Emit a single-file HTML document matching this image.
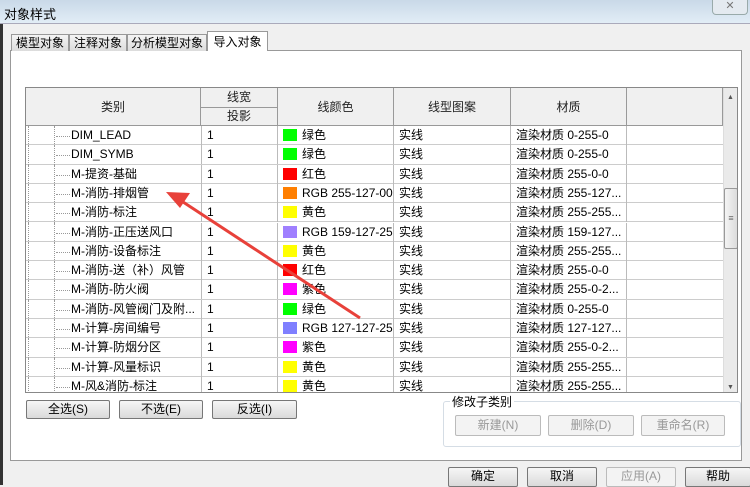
<!DOCTYPE html><html><head><meta charset="utf-8"><style>
*{margin:0;padding:0;box-sizing:border-box}
body{width:750px;height:485px;overflow:hidden;background:#f0f0f0;font-family:"Liberation Sans","Noto Sans CJK SC",sans-serif;font-size:12px;color:#000;position:relative}
.abs{position:absolute}
.title{left:0;top:0;width:750px;height:24px;background:linear-gradient(#c9d9e8,#e2edf6);border-bottom:1px solid #aab}
.tab{position:absolute;top:34px;height:17px;border:1px solid #999;border-bottom:none;background:linear-gradient(#f4f4f4,#dcdcdc);font-size:12px;text-align:center;line-height:16px}
.panel{left:10px;top:50px;width:732px;height:411px;background:#fff;border:1px solid #999}
.grid{left:25px;top:87px;width:713px;height:306px;border:1px solid #888;background:#fff;overflow:hidden}
.hd{position:absolute;background:#f0f0f0;border-right:1px solid #999;border-bottom:1px solid #999;text-align:center;color:#222}
.row{position:absolute;left:0;height:19.3px;width:697px;border-bottom:1px solid #ccc}
.c{position:absolute;top:0;height:19px;line-height:19px;border-right:1px solid #bbb;white-space:nowrap;overflow:hidden;padding-left:5px}
.sw{display:inline-block;width:14px;height:12px;vertical-align:-2px;margin-right:5px}
.btn{position:absolute;height:19px;border:1px solid #777;border-radius:2px;background:linear-gradient(#f6f6f6,#dadada);text-align:center;line-height:17px;font-size:12px}
.dis{color:#999;border-color:#bbb;background:#f3f3f3}
</style></head><body>
<div class="abs title"></div>
<div class="abs" style="left:4px;top:4px;font-size:13px">对象样式</div>
<div class="abs" style="left:712px;top:0;width:36px;height:15px;border:1px solid #9aa;border-top:none;border-radius:0 0 4px 4px;background:#e4eaf0;text-align:center;font-size:11px;color:#777;line-height:13px">✕</div>
<div class="abs" style="left:0;top:24px;width:3px;height:461px;background:#333"></div>
<div class="abs panel"></div>
<div class="tab" style="left:11px;width:58px">模型对象</div>
<div class="tab" style="left:69px;width:58px">注释对象</div>
<div class="tab" style="left:127px;width:80px">分析模型对象</div>
<div class="tab" style="left:207px;top:31px;height:20px;width:61px;background:#fff;line-height:20px">导入对象</div>
<div class="abs grid">
<div class="hd" style="left:0;top:0;width:175px;height:38px;line-height:38px">类别</div>
<div class="hd" style="left:175px;top:0;width:77px;height:20px;line-height:19px">线宽</div>
<div class="hd" style="left:175px;top:20px;width:77px;height:18px;line-height:17px">投影</div>
<div class="hd" style="left:252px;top:0;width:116px;height:38px;line-height:38px">线颜色</div>
<div class="hd" style="left:368px;top:0;width:117px;height:38px;line-height:38px">线型图案</div>
<div class="hd" style="left:485px;top:0;width:116px;height:38px;line-height:38px">材质</div>
<div class="hd" style="left:601px;top:0;width:96px;height:38px"></div>
<div id="rows"></div>
<div class="abs" style="left:697px;top:0;width:16px;height:306px;background:#eaeaea;border-left:1px solid #ddd"></div>
<div class="abs" style="left:698px;top:100px;width:14px;height:61px;background:linear-gradient(90deg,#f4f4f4,#dcdcdc);border:1px solid #999;border-radius:2px;text-align:center;line-height:58px;color:#666;font-size:9px">≡</div>
<div class="abs" style="left:701px;top:6px;font-size:7px;color:#555">▲</div>
<div class="abs" style="left:701px;top:296px;font-size:7px;color:#555">▼</div>
</div>
<div class="btn" style="left:26px;top:400px;width:84px">全选(S)</div>
<div class="btn" style="left:119px;top:400px;width:84px">不选(E)</div>
<div class="btn" style="left:212px;top:400px;width:85px">反选(I)</div>
<div class="abs" style="left:443px;top:401px;width:298px;height:46px;border:1px solid #d5dde5;border-radius:3px"></div>
<div class="abs" style="left:450px;top:393px;background:#fff;padding:0 2px">修改子类别</div>
<div class="btn dis" style="left:455px;top:415px;width:86px;height:21px;line-height:19px">新建(N)</div>
<div class="btn dis" style="left:548px;top:415px;width:86px;height:21px;line-height:19px">删除(D)</div>
<div class="btn dis" style="left:641px;top:415px;width:84px;height:21px;line-height:19px">重命名(R)</div>
<div class="btn" style="left:448px;top:467px;width:70px;height:20px">确定</div>
<div class="btn" style="left:527px;top:467px;width:70px;height:20px">取消</div>
<div class="btn dis" style="left:606px;top:467px;width:70px;height:20px">应用(A)</div>
<div class="btn" style="left:685px;top:467px;width:66px;height:20px">帮助</div>
<svg class="abs" style="left:0;top:0" width="750" height="485"><line x1="360" y1="318" x2="180" y2="200" stroke="#e8413a" stroke-width="3"/><polygon points="166,192 190,193 180,208" fill="#e8413a"/></svg>
<script>
var d=[["DIM_LEAD","#00ff00","绿色","渲染材质 0-255-0"],["DIM_SYMB","#00ff00","绿色","渲染材质 0-255-0"],["M-提资-基础","#ff0000","红色","渲染材质 255-0-0"],["M-消防-排烟管","#ff7f00","RGB 255-127-000","渲染材质 255-127..."],["M-消防-标注","#ffff00","黄色","渲染材质 255-255..."],["M-消防-正压送风口","#9f7fff","RGB 159-127-255","渲染材质 159-127..."],["M-消防-设备标注","#ffff00","黄色","渲染材质 255-255..."],["M-消防-送（补）风管","#ff0000","红色","渲染材质 255-0-0"],["M-消防-防火阀","#ff00ff","紫色","渲染材质 255-0-2..."],["M-消防-风管阀门及附...","#00ff00","绿色","渲染材质 0-255-0"],["M-计算-房间编号","#7f7fff","RGB 127-127-255","渲染材质 127-127..."],["M-计算-防烟分区","#ff00ff","紫色","渲染材质 255-0-2..."],["M-计算-风量标识","#ffff00","黄色","渲染材质 255-255..."],["M-风&消防-标注","#ffff00","黄色","渲染材质 255-255..."]];
var h="";d.forEach(function(r,i){var t=38+i*19.3;h+='<div class="row" style="top:'+t+'px"><div class="abs" style="left:2px;top:0;height:20px;border-left:1px dotted #999"></div><div class="abs" style="left:28px;top:0;height:20px;border-left:1px dotted #999"></div><div class="abs" style="left:30px;top:10px;width:14px;border-top:1px dotted #999"></div><div class="c" style="left:40px;width:135px;border:none">'+r[0]+'</div><div class="c" style="left:175px;width:77px;border-left:1px solid #bbb">1</div><div class="c" style="left:252px;width:116px"><span class="sw" style="background:'+r[1]+'"></span>'+r[2]+'</div><div class="c" style="left:368px;width:117px">实线</div><div class="c" style="left:485px;width:116px">'+r[3]+'</div></div>'});document.getElementById("rows").innerHTML=h;
</script>
</body></html>
